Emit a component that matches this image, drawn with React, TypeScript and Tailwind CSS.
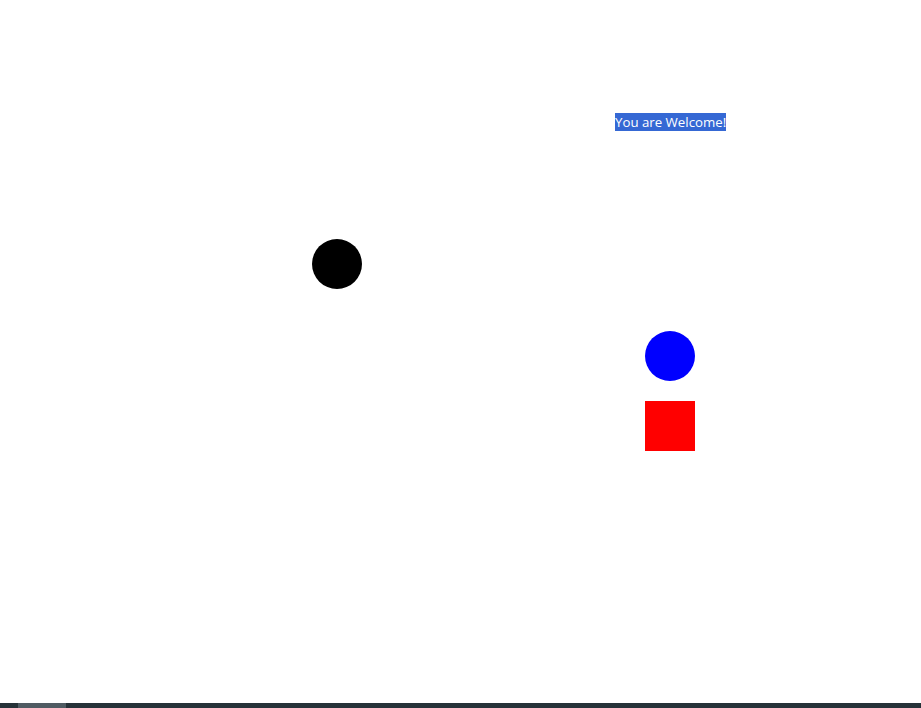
import React from 'react';

const App = () => {
  return (
    <div className="w-[921px] h-[708px] flex flex-col bg-white overflow-hidden" style={{ fontFamily: '"Open Sans", "Noto Sans", sans-serif' }}>
      <div className="relative flex-1">
        <span className="absolute left-[615px] top-[113px] h-[18px] leading-[18px] text-[13.25px] text-white bg-[#3568d4] whitespace-nowrap">
          You are Welcome!
        </span>
        <div className="absolute left-[312px] top-[239px] w-[50px] h-[50px] rounded-full bg-black" />
        <div className="absolute left-[645px] top-[331px] w-[50px] h-[50px] rounded-full bg-[#0000ff]" />
        <div className="absolute left-[645px] top-[401px] w-[50px] h-[50px] bg-[#ff0000]" />
      </div>
      <div className="h-[5px] bg-[#263238] flex">
        <div className="ml-[18px] w-[48px] h-full bg-[#4f5b62]" />
      </div>
    </div>
  );
};

export default App;
